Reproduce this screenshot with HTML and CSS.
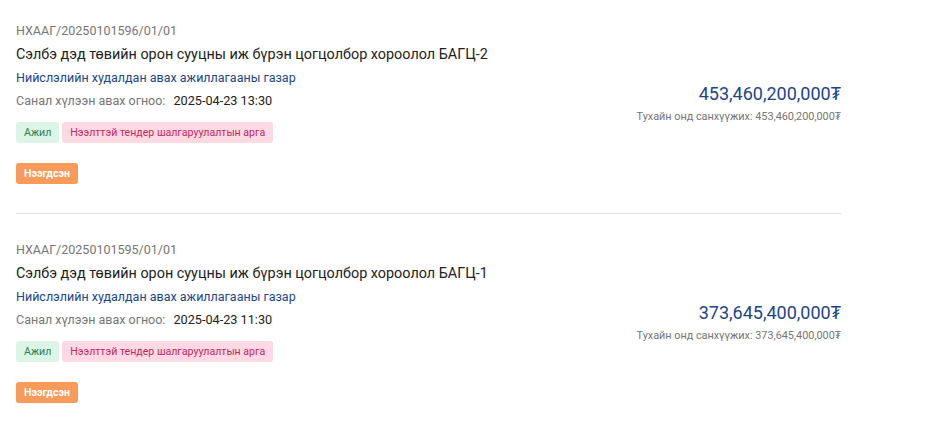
FILE: index.html
```html
<!DOCTYPE html>
<html lang="mn">
<head>
<meta charset="utf-8">
<link rel="stylesheet" href="styles.css">
</head>
<body>
<div class="list">
  <div class="item">
    <div class="left">
      <div class="code">НХААГ/20250101596/01/01</div>
      <div class="title">Сэлбэ дэд төвийн орон сууцны иж бүрэн цогцолбор хороолол БАГЦ-2</div>
      <div class="org">Нийслэлийн худалдан авах ажиллагааны газар</div>
      <div class="date"><span class="label">Санал хүлээн авах огноо:</span><span class="value">2025-04-23 13:30</span></div>
      <div class="tags"><span class="tag green">Ажил</span><span class="tag pink">Нээлттэй тендер шалгаруулалтын арга</span></div>
      <div class="status"><span class="badge">Нээгдсэн</span></div>
    </div>
    <div class="right">
      <div class="amount">453,460,200,000₮</div>
      <div class="budget">Тухайн онд санхүүжих: 453,460,200,000₮</div>
    </div>
  </div>
  <div class="item">
    <div class="left">
      <div class="code">НХААГ/20250101595/01/01</div>
      <div class="title">Сэлбэ дэд төвийн орон сууцны иж бүрэн цогцолбор хороолол БАГЦ-1</div>
      <div class="org">Нийслэлийн худалдан авах ажиллагааны газар</div>
      <div class="date"><span class="label">Санал хүлээн авах огноо:</span><span class="value">2025-04-23 11:30</span></div>
      <div class="tags"><span class="tag green">Ажил</span><span class="tag pink">Нээлттэй тендер шалгаруулалтын арга</span></div>
      <div class="status"><span class="badge">Нээгдсэн</span></div>
    </div>
    <div class="right">
      <div class="amount">373,645,400,000₮</div>
      <div class="budget">Тухайн онд санхүүжих: 373,645,400,000₮</div>
    </div>
  </div>
</div>
</body>
</html>
```
FILE: styles.css
```css
html, body {
  margin: 0;
  padding: 0;
  background: #ffffff;
  font-family: Roboto, "Noto Sans", Arial, sans-serif;
}
.list {
  width: 825px;
  margin-left: 16px;
  display: flex;
  flex-direction: column;
  gap: 5px;
}
.item {
  display: flex;
  align-items: center;
  justify-content: space-between;
  padding: 21px 0 29px;
  border-bottom: 1px solid #e0e0e0;
}
.item:last-child { border-bottom: none; }
.left {
  display: flex;
  flex-direction: column;
}
.code {
  font-size: 12.5px;
  line-height: 20px;
  color: #757575;
}
.title {
  margin-top: 4px;
  font-size: 14.4px;
  line-height: 20px;
  color: #212121;
}
.org {
  margin-top: 3px;
  font-size: 12.5px;
  line-height: 20px;
  color: #1c4587;
}
.date {
  margin-top: 3px;
  font-size: 12.5px;
  line-height: 20px;
  display: flex;
  gap: 8px;
}
.label { color: #757575; }
.value { color: #212121; font-size: 12.7px; }
.tags {
  margin-top: 11px;
  display: flex;
  gap: 3px;
}
.tag {
  font-size: 10.6px;
  line-height: 21px;
  height: 21px;
  padding: 0 8px;
  border-radius: 3px;
}
.green { background: #dcf5e6; color: #2e7d4f; }
.pink { background: #fcd9e3; color: #c4275f; }
.status {
  margin-top: 20px;
  display: flex;
}
.badge {
  font-size: 10.6px;
  font-weight: 700;
  line-height: 21px;
  height: 21px;
  padding: 0 8px;
  border-radius: 3px;
  background: #f79a5a;
  color: #ffffff;
}
.right {
  display: flex;
  flex-direction: column;
  align-items: flex-end;
}
.amount {
  font-size: 18px;
  line-height: 24px;
  color: #1c4587;
}
.budget {
  margin-top: 4px;
  font-size: 10.85px;
  line-height: 14px;
  color: #757575;
}
```
